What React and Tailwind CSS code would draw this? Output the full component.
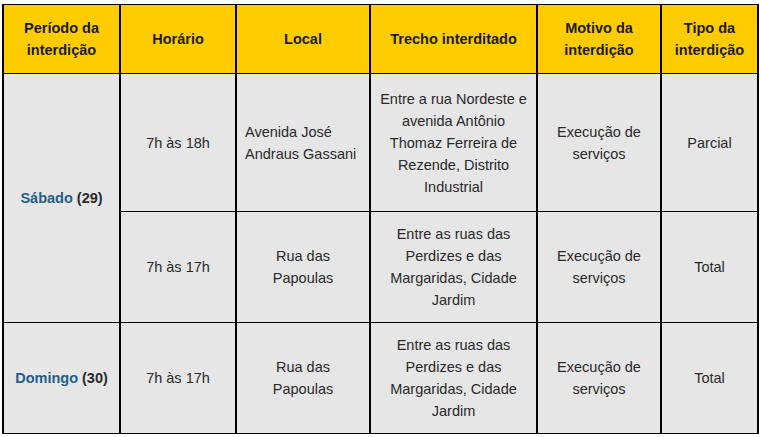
export default function App() {
  const font = "font-['Liberation_Sans',Arial,sans-serif]";
  const th = font + " border-x-2 border-y border-black bg-[#ffcc00] font-bold text-[14.5px] leading-[22px] text-[#1a1a1a] text-center align-middle px-1";
  const td = font + " border-x-2 border-y border-black bg-[#e6e6e6] text-[14.5px] leading-[22px] text-[#2a2a2a] text-center align-middle px-1";
  return (
    <div className={"w-[761px] h-[437px] bg-white pt-[4px] pl-[2px] " + font}>
      <table className={"border-collapse table-fixed w-[755px] " + font}>
        <colgroup>
          <col className="w-[117px]" />
          <col className="w-[116px]" />
          <col className="w-[134px]" />
          <col className="w-[167px]" />
          <col className="w-[124px]" />
          <col className="w-[97px]" />
        </colgroup>
        <thead>
          <tr className="h-[69px]">
            <th className={th}>Período da<br />interdição</th>
            <th className={th}>Horário</th>
            <th className={th}>Local</th>
            <th className={th}>Trecho interditado</th>
            <th className={th}>Motivo da<br />interdição</th>
            <th className={th}>Tipo da<br />interdição</th>
          </tr>
        </thead>
        <tbody>
          <tr className="h-[138px]">
            <td rowSpan={2} className={td}>
              <span className="font-bold text-[#1f5f8b]">Sábado</span>{" "}
              <span className="font-bold">(29)</span>
            </td>
            <td className={td}>7h às 18h</td>
            <td className={td + " !text-left !pl-2"}>Avenida José<br />Andraus Gassani</td>
            <td className={td}>Entre a rua Nordeste e<br />avenida Antônio<br />Thomaz Ferreira de<br />Rezende, Distrito<br />Industrial</td>
            <td className={td}>Execução de<br />serviços</td>
            <td className={td}>Parcial</td>
          </tr>
          <tr className="h-[111px]">
            <td className={td}>7h às 17h</td>
            <td className={td}>Rua das<br />Papoulas</td>
            <td className={td}>Entre as ruas das<br />Perdizes e das<br />Margaridas, Cidade<br />Jardim</td>
            <td className={td}>Execução de<br />serviços</td>
            <td className={td}>Total</td>
          </tr>
          <tr className="h-[111px]">
            <td className={td}>
              <span className="font-bold text-[#1f5f8b]">Domingo</span>{" "}
              <span className="font-bold">(30)</span>
            </td>
            <td className={td}>7h às 17h</td>
            <td className={td}>Rua das<br />Papoulas</td>
            <td className={td}>Entre as ruas das<br />Perdizes e das<br />Margaridas, Cidade<br />Jardim</td>
            <td className={td}>Execução de<br />serviços</td>
            <td className={td}>Total</td>
          </tr>
        </tbody>
      </table>
    </div>
  );
}
